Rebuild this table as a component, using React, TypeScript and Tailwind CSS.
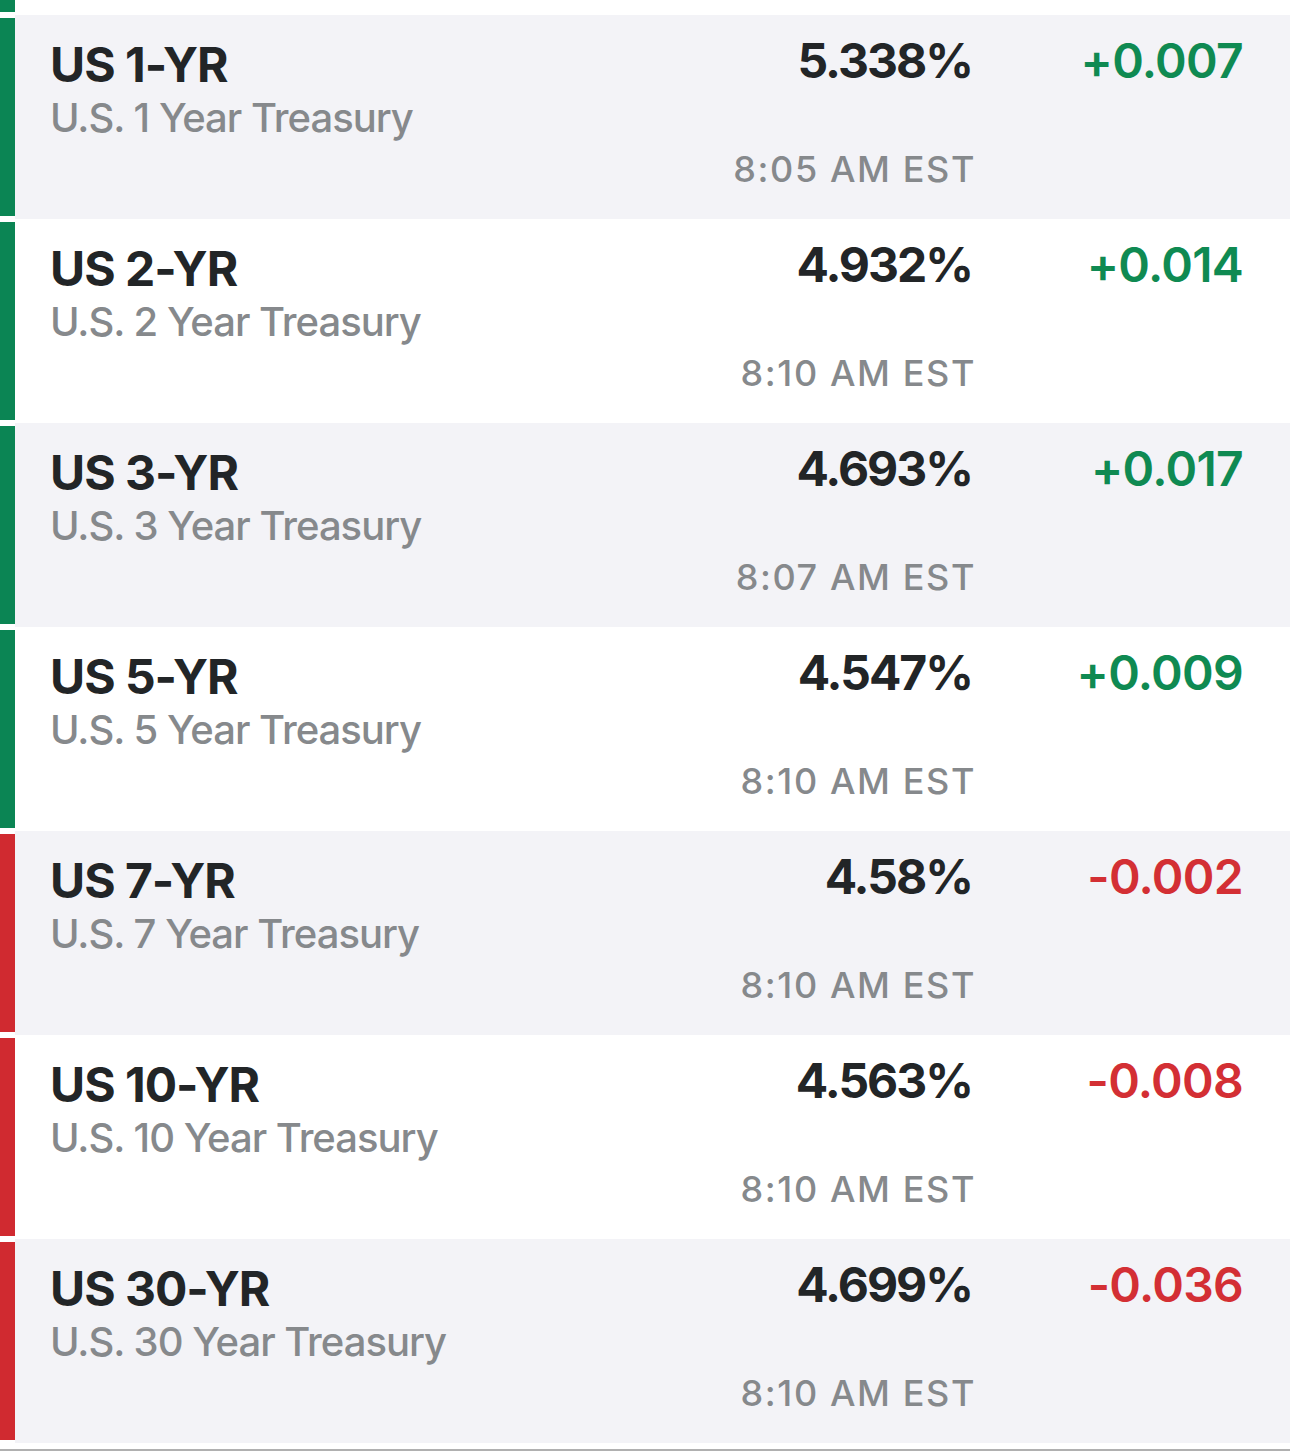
type Quote = {
  symbol: string;
  name: string;
  price: string;
  change: string;
  time: string;
  up: boolean;
};

const quotes: Quote[] = [
  { symbol: "US 1-YR", name: "U.S. 1 Year Treasury", price: "5.338%", change: "+0.007", time: "8:05 AM EST", up: true },
  { symbol: "US 2-YR", name: "U.S. 2 Year Treasury", price: "4.932%", change: "+0.014", time: "8:10 AM EST", up: true },
  { symbol: "US 3-YR", name: "U.S. 3 Year Treasury", price: "4.693%", change: "+0.017", time: "8:07 AM EST", up: true },
  { symbol: "US 5-YR", name: "U.S. 5 Year Treasury", price: "4.547%", change: "+0.009", time: "8:10 AM EST", up: true },
  { symbol: "US 7-YR", name: "U.S. 7 Year Treasury", price: "4.58%", change: "-0.002", time: "8:10 AM EST", up: false },
  { symbol: "US 10-YR", name: "U.S. 10 Year Treasury", price: "4.563%", change: "-0.008", time: "8:10 AM EST", up: false },
  { symbol: "US 30-YR", name: "U.S. 30 Year Treasury", price: "4.699%", change: "-0.036", time: "8:10 AM EST", up: false },
];

function QuoteRow({ q, shaded }: { q: Quote; shaded: boolean }) {
  return (
    <div className="flex h-[204px]">
      {/* Direction bar */}
      <div className="w-[15px] py-[3px] bg-white">
        <div className={`h-full ${q.up ? "bg-[#0b8554]" : "bg-[#d02a30]"}`} />
      </div>

      <div className={`flex flex-1 pl-[35px] pr-[47px] pt-[22px] ${shaded ? "bg-[#f3f3f7]" : "bg-white"}`}>
        {/* Name */}
        <div className="flex flex-1 flex-col">
          <div className="text-[48px] leading-[56px] font-bold tracking-[-1px] text-[#222527]">{q.symbol}</div>
          <div className="text-[40px] leading-[50px] font-medium tracking-[-1px] text-[#86898c]">{q.name}</div>
        </div>

        {/* Price + time */}
        <div className="flex flex-col items-end">
          <div className="-mt-[4px] text-[48px] leading-[56px] font-bold tracking-[-2px] text-[#222527]">{q.price}</div>
          <div className="mt-[58px] -mr-1 text-[36px] leading-[44px] font-medium tracking-[1.6px] text-[#86898c]">{q.time}</div>
        </div>

        {/* Change */}
        <div className="flex w-[271px] justify-end">
          <div
            className={`-mt-[4px] text-[48px] leading-[56px] font-semibold tracking-[-0.7px] ${
              q.up ? "text-[#0f8a52]" : "text-[#d32f34]"
            }`}
          >
            {q.change}
          </div>
        </div>
      </div>
    </div>
  );
}

export default function App() {
  return (
    <div className="w-[1290px] bg-white font-['Inter',sans-serif]">
      {/* Partial row cut off at the top */}
      <div className="flex h-[15px]">
        <div className="w-[15px] pb-[3px]">
          <div className="h-full bg-[#0b8554]" />
        </div>
        <div className="flex-1 bg-white" />
      </div>

      {quotes.map((q, i) => (
        <QuoteRow key={q.symbol} q={q} shaded={i % 2 === 0} />
      ))}

      <div className="h-[6px] bg-white" />
      <div className="h-[2px] bg-[#b0b0b0]" />
    </div>
  );
}
